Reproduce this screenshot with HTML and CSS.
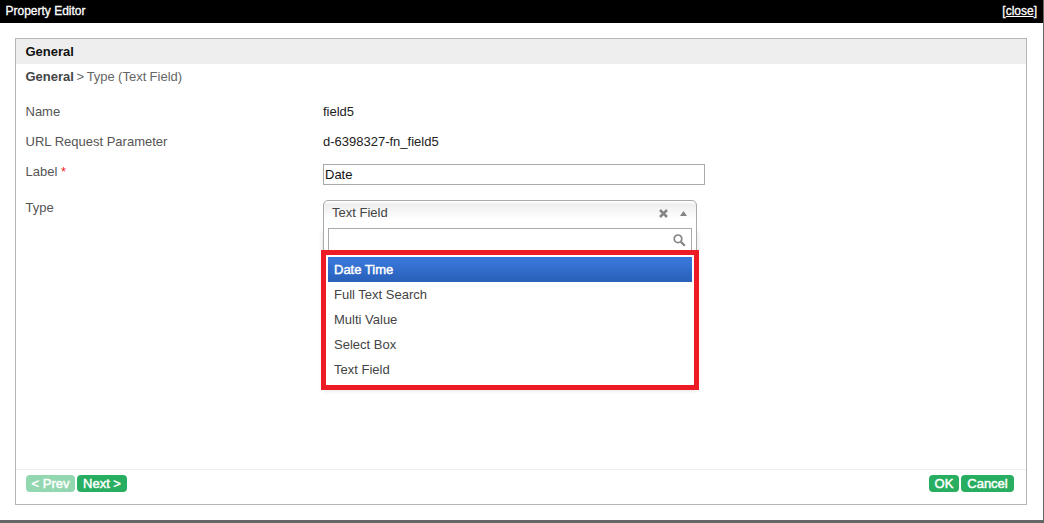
FILE: index.html
```html
<!DOCTYPE html>
<html lang="en">
<head>
<meta charset="utf-8">
<title>Property Editor</title>
<link rel="stylesheet" href="styles.css">
</head>
<body>
<div class="window">
  <header class="titlebar"><span class="title">Property Editor</span><span class="close">[<a class="close-link">close</a>]</span></header>
  <main class="panel">
    <h1 class="panel-title">General</h1>
    <div class="breadcrumb"><b class="crumb">General</b> <span class="sep">&gt;</span> <span class="type-crumb">Type (Text Field)</span></div>
    <form class="fields">
      <div class="row"><span class="label">Name</span><span class="value">field5</span></div>
      <div class="row"><span class="label">URL Request Parameter</span><span class="value">d-6398327-fn_field5</span></div>
      <div class="row row-input"><span class="label">Label <span class="required">*</span></span><div class="input"><span class="input-text">Date</span></div></div>
      <div class="row row-select"><span class="label">Type</span>
        <div class="select">
          <div class="select-head"><span class="selected">Text Field</span>
            <svg class="clear" width="9" height="9" viewBox="0 0 9 9"><path d="M1 1L8 8M8 1L1 8" stroke="#858585" stroke-width="2.5"/></svg>
            <svg class="arrow" width="7" height="5" viewBox="0 0 7 5"><path d="M3.5 0L7 5H0Z" fill="#858585"/></svg>
          </div>
          <div class="search">
            <svg width="13" height="13" viewBox="0 0 13 13" fill="none" stroke="#858585"><circle cx="5" cy="4.8" r="3.8" stroke-width="1.7"/><path d="M7.8 7.7L11.8 11.7" stroke-width="2.3"/></svg>
          </div>
          <div class="options">
            <div class="option active">Date Time</div>
            <div class="option">Full Text Search</div>
            <div class="option">Multi Value</div>
            <div class="option">Select Box</div>
            <div class="option">Text Field</div>
          </div>
        </div>
      </div>
    </form>
    <footer class="actions">
      <div class="group"><span class="btn prev disabled">&lt; Prev</span><span class="btn next">Next &gt;</span></div>
      <div class="group"><span class="btn ok">OK</span><span class="btn cancel">Cancel</span></div>
    </footer>
  </main>
</div>
</body>
</html>
```
FILE: styles.css
```css
* { box-sizing: border-box; }
body { margin: 0; font: 13px/16px "Liberation Sans", Arial, sans-serif; color: #222; background: #666; overflow: hidden; }
.window { width: 1043px; height: 520px; background: #fff; display: flex; flex-direction: column; }
.titlebar { height: 23px; background: #000; color: #fff; display: flex; justify-content: space-between; padding: 3px 6px 0 5.5px; font-size: 12px; -webkit-text-stroke: .3px #fff; }
.close-link { text-decoration: underline; }
.panel { width: 1012px; height: 467px; margin: 15px 0 0 15px; border: 1px solid #b5b5b5; display: flex; flex-direction: column; }
.panel-title { margin: 0; height: 25px; padding: 5px 9.5px 0; background: #eee; color: #111; font-size: 13px; line-height: 16px; }
.breadcrumb { height: 40px; padding: 5px 9.5px 0; color: #666; white-space: nowrap; word-spacing: -.3px; }
.crumb { color: #444; }
.sep { margin: 0 -.6px 0 -.7px; }
.fields { flex: 1; padding-left: 9.5px; }
.row { display: flex; height: 30px; line-height: 16px; }
.label { width: 297.5px; color: #555; }
.required { color: #f22; }
.row-input { height: 36px; }
.input { width: 382px; height: 21px; border: 1px solid #aaa; padding: 2px 1px; color: #111; }
.select { position: relative; z-index: 0; width: 374px; height: 186px; border: 1px solid #aaa; border-radius: 5px 5px 0 0; background: linear-gradient(#fff 1px, #eee 3px, #fff 18px); color: #444; }
.select::before { content: ""; position: absolute; z-index: -1; inset: 26px -1px -1px; box-shadow: 0 4px 5px rgba(0,0,0,.15); }
.select-head { display: flex; align-items: center; height: 27px; padding: 0 9px 3px 8px; }
.selected { flex: 1; margin-top: -1px; }
.clear { margin-right: 12px; }
.search { width: 364px; height: 24px; margin-left: 4px; border: 1px solid #aaa; background: #fff; display: flex; justify-content: flex-end; padding: 5px 5px 0 0; }
.options { width: 378px; height: 140px; margin: -2px 0 0 -3px; border: 5px solid #ed1c24; background: #fff; padding: 2px; position: relative; }
.option { height: 25px; line-height: 16px; padding: 5px 6px 4px; }
.active { background: linear-gradient(#3875d7 20%, #2a62bc 90%); color: #fff; -webkit-text-stroke: .45px #fff; }
.actions { height: 35px; border-top: 1px solid #eee; padding: 5px 12px 0 10px; display: flex; justify-content: space-between; }
.group { display: flex; gap: 2px; }
.btn { height: 17px; border-radius: 4px; background: #27ae60; color: #fff; text-align: center; -webkit-text-stroke: .45px #fff; line-height: 17px; white-space: nowrap; }
.disabled { background: #93d7b0; }
.prev { width: 49px; }
.next { width: 50px; }
.ok { width: 30px; }
.cancel { width: 53px; }
```
